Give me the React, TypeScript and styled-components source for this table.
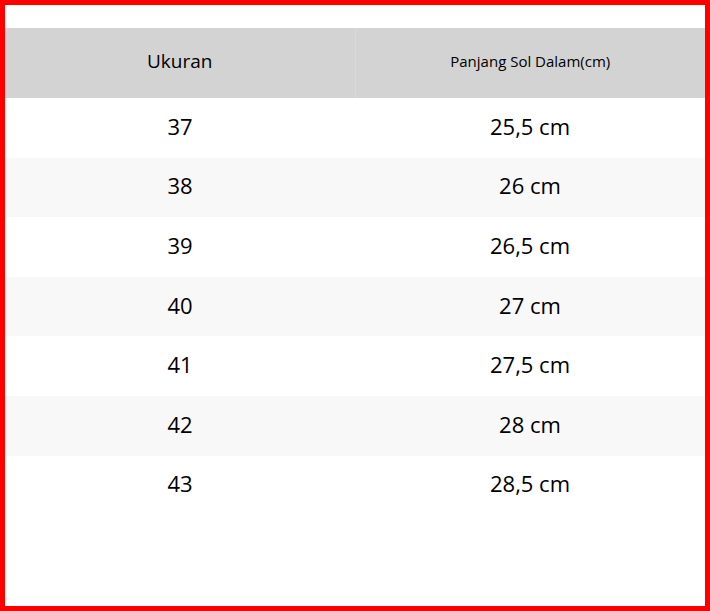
import React from 'react';
import styled, { createGlobalStyle } from 'styled-components';

const GlobalStyle = createGlobalStyle`
  html, body {
    margin: 0;
    padding: 0;
    background: #ffffff;
  }
  * {
    box-sizing: border-box;
  }
`;

const Frame = styled.div`
  width: 710px;
  height: 611px;
  border: 5px solid #ff0000;
  padding-top: 23px;
  background: #ffffff;
  font-family: 'Open Sans', 'Noto Sans', sans-serif;
  color: #000000;
`;

const Table = styled.table`
  width: 100%;
  border-collapse: collapse;
  table-layout: fixed;
`;

const HeadCell = styled.th<{ $small?: boolean }>`
  height: 70px;
  padding: 0 0 4px;
  background: #d3d3d3;
  font-weight: 400;
  font-size: ${p => (p.$small ? '15px' : '19px')};
  text-align: center;
  vertical-align: middle;

  & + & {
    border-left: 1px solid #dadada;
  }
`;

const Row = styled.tr<{ $shaded?: boolean }>`
  height: 59.6px;
  background: ${p => (p.$shaded ? '#f8f8f8' : '#ffffff')};
`;

const Cell = styled.td`
  padding: 0 0 4px;
  font-size: 22px;
  text-align: center;
  vertical-align: middle;
`;

const sizes = [
  { size: '37', length: '25,5 cm' },
  { size: '38', length: '26 cm' },
  { size: '39', length: '26,5 cm' },
  { size: '40', length: '27 cm' },
  { size: '41', length: '27,5 cm' },
  { size: '42', length: '28 cm' },
  { size: '43', length: '28,5 cm' },
];

export default function App() {
  return (
    <>
      <GlobalStyle />
      <Frame>
        <Table>
          <thead>
            <tr>
              <HeadCell>Ukuran</HeadCell>
              <HeadCell $small>Panjang Sol Dalam(cm)</HeadCell>
            </tr>
          </thead>
          <tbody>
            {sizes.map((row, i) => (
              <Row key={row.size} $shaded={i % 2 === 1}>
                <Cell>{row.size}</Cell>
                <Cell>{row.length}</Cell>
              </Row>
            ))}
          </tbody>
        </Table>
      </Frame>
    </>
  );
}
